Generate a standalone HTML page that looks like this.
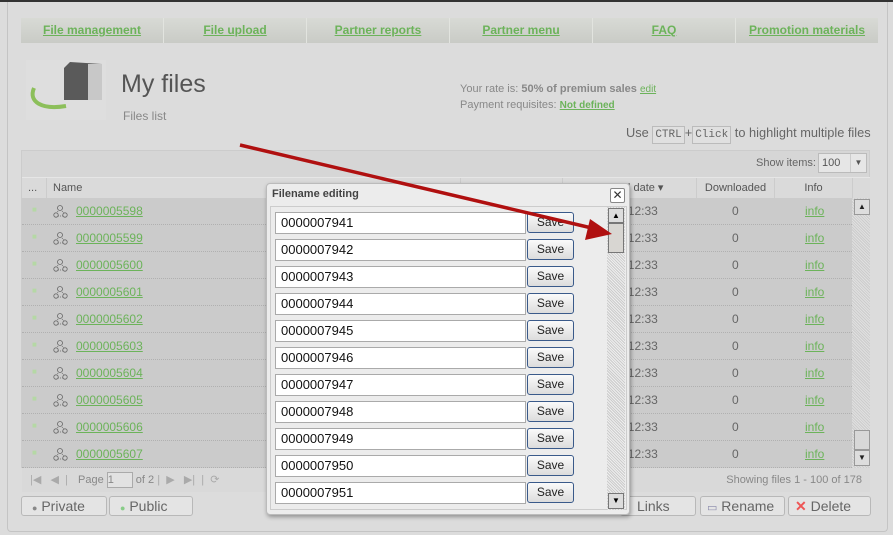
<!DOCTYPE html>
<html><head><meta charset="utf-8"><style>
*{box-sizing:border-box;margin:0;padding:0}
body{width:893px;height:535px;background:#dcdcdc;font-family:"Liberation Sans",Arial,sans-serif;font-size:11px;color:#777;position:relative;overflow:hidden}
.a{position:absolute}
a{color:#6cb35a;text-decoration:underline}
.nav{left:21px;top:18px;width:857px;height:25px;background:linear-gradient(#d8dad5,#c9cbc6);display:flex}
.nav div{flex:1;text-align:center;line-height:25px;font-weight:bold;font-size:12px;border-left:1px solid #e2e4df}
.nav div:first-child{border:none}
.row{position:absolute;left:22px;width:830px;height:27px;background:#cbcbcb;border-bottom:1px dotted #b0b0b0}
.btn{position:absolute;top:496px;height:20px;border:1px solid #b8b8b8;border-radius:3px;background:#e4e4e4;font-size:14px;color:#666;line-height:18px}
.inp{position:absolute;left:275px;width:251px;height:22px;background:#fff;border:1px solid #aaa;font-family:"Liberation Sans",sans-serif;font-size:13px;color:#111;line-height:20px;padding-left:5px}
.sv{position:absolute;left:527px;width:47px;height:21px;border:1px solid #3a5a8a;border-radius:3px;background:linear-gradient(#fafafa,#dcdcdc);font-size:12px;color:#222;text-align:center;line-height:19px}
</style></head><body>
<div class="a" style="left:0;top:0;width:893px;height:2px;background:#333"></div>
<div class="a" style="left:7px;top:2px;width:881px;height:530px;border:1px solid #c4c4c4;border-top:none;border-radius:0 0 4px 4px;background:#dcdcdc"></div>
<div class="a nav"><div><a>File management</a></div><div><a>File upload</a></div><div><a>Partner reports</a></div><div><a>Partner menu</a></div><div><a>FAQ</a></div><div><a>Promotion materials</a></div></div>
<svg class="a" style="left:26px;top:60px" width="80" height="60"><rect x="0" y="0" width="80" height="60" fill="#dedede"/><polygon points="38,8 44,2 76,4 76,40 38,40" fill="#5a5a5a"/><polygon points="62,4 76,4 76,40 62,40" fill="#c8c8c8"/><path d="M8,28 C2,42 16,50 40,46" stroke="#8cbf5a" stroke-width="4" fill="none"/></svg>
<div class="a" style="left:121px;top:70px;font-size:25px;color:#555">My files</div>
<div class="a" style="left:123px;top:109px;font-size:12px;color:#888">Files list</div>
<div class="a" style="left:460px;top:83px;font-size:11px;color:#888">Your rate is: <b>50% of premium sales</b> <a style="font-size:10px">edit</a></div>
<div class="a" style="left:460px;top:99px;font-size:11px;color:#888">Payment requisites: <a style="font-weight:bold;font-size:10px">Not defined</a></div>
<div class="a" style="left:626px;top:125px;font-size:12.8px;color:#666;white-space:nowrap">Use <span style="font-family:'Liberation Mono',monospace;font-size:11px;border:1px solid #bbb;background:#e0e0e0;padding:2px 2px">CTRL</span>+<span style="font-family:'Liberation Mono',monospace;font-size:11px;border:1px solid #bbb;background:#e0e0e0;padding:2px 2px">Click</span> to highlight multiple files</div>
<div class="a" style="left:21px;top:150px;width:849px;height:318px;border:1px solid #ccc;background:#d6d6d6"></div>
<div class="a" style="left:756px;top:157px;font-size:11px;color:#666">Show items:</div>
<div class="a" style="left:818px;top:153px;width:49px;height:20px;border:1px solid #bbb;background:#e6e6e6;font-size:11px;line-height:18px;padding-left:3px;color:#555">100<span style="position:absolute;right:0;top:0;width:16px;height:18px;border-left:1px solid #ccc;text-align:center;font-size:8px">▼</span></div>
<div class="a" style="left:22px;top:177px;width:848px;height:21px;background:#dadada;border-top:1px solid #e6e6e6;font-size:11px;color:#555;line-height:21px">
<span class="a" style="left:6px">...</span><span class="a" style="left:24px;height:21px;border-left:1px solid #ccc;padding-left:6px">Name</span>
<span class="a" style="left:438px;height:21px;border-left:1px solid #ccc;padding-left:6px;color:#bbb">Size</span>
<span class="a" style="left:540px;width:134px;height:21px;border-left:1px solid #ccc;text-align:center">Upload date ▾</span>
<span class="a" style="left:674px;width:78px;height:21px;border-left:1px solid #ccc;text-align:center">Downloaded</span>
<span class="a" style="left:752px;width:78px;height:21px;border-left:1px solid #ccc;text-align:center">Info</span>
<span class="a" style="left:830px;width:18px;height:21px;border-left:1px solid #ccc"></span></div>
<div id="rows"></div>
<div class="a" style="left:852px;top:198px;width:18px;height:270px;background:repeating-linear-gradient(45deg,#ccc 0 1px,#e0e0e0 1px 2px)"></div>
<div class="a" style="left:854px;top:199px;width:16px;height:16px;background:#ddd;border:1px solid #999;font-size:8px;text-align:center;line-height:14px;color:#222">▲</div>
<div class="a" style="left:854px;top:430px;width:16px;height:20px;background:#d8d8d8;border:1px solid #999"></div>
<div class="a" style="left:854px;top:450px;width:16px;height:16px;background:#ddd;border:1px solid #999;font-size:8px;text-align:center;line-height:14px;color:#222">▼</div>
<div class="a" style="left:22px;top:468px;width:848px;height:24px;background:#d9d9d9;font-size:11px;color:#888;line-height:24px">
<span class="a" style="left:8px;color:#aaa">|◀ &nbsp; ◀ &nbsp;|</span><span class="a" style="left:56px">Page <span style="display:inline-block;width:26px;height:16px;border:1px solid #aaa;background:#e2e2e2;line-height:14px;vertical-align:middle">1</span> of 2 <span style="color:#aaa">| &nbsp;▶ &nbsp; ▶| &nbsp;| &nbsp;⟳</span></span>
<span class="a" style="right:8px">Showing files 1 - 100 of 178</span></div>
<div class="btn" style="left:21px;width:86px;padding-left:10px"><span style="color:#888;font-size:9px">●</span> Private</div>
<div class="btn" style="left:109px;width:84px;padding-left:10px"><span style="color:#8c8;font-size:9px">●</span> Public</div>
<div class="btn" style="left:620px;width:76px;padding-left:16px">Links</div>
<div class="btn" style="left:700px;width:85px;padding-left:6px"><span style="color:#88a;font-size:11px">▭</span> Rename</div>
<div class="btn" style="left:788px;width:83px;padding-left:6px"><span style="color:#e55;font-weight:bold">✕</span> Delete</div>
<div class="a" style="left:266px;top:183px;width:364px;height:332px;background:#ececec;border:1px solid #bbb;border-radius:4px;box-shadow:1px 2px 4px rgba(0,0,0,.35)"></div>
<div class="a" style="left:272px;top:188px;font-weight:bold;font-size:11px;color:#444">Filename editing</div>
<div class="a" style="left:610px;top:188px;width:15px;height:15px;border:1px solid #888;border-radius:2px;background:#fff;font-size:12px;text-align:center;line-height:12px;color:#333">✕</div>
<div class="a" style="left:270px;top:206px;width:357px;height:304px;border:1px solid #ccc"></div>
<div id="ed"></div>
<div class="a" style="left:607px;top:207px;width:18px;height:303px;background:repeating-linear-gradient(45deg,#ccc 0 1px,#eee 1px 2px)"></div>
<div class="a" style="left:608px;top:208px;width:16px;height:15px;background:#ddd;border:1px solid #777;font-size:8px;text-align:center;line-height:13px;color:#000">▲</div>
<div class="a" style="left:608px;top:223px;width:16px;height:30px;background:#d8d6d2;border:1px solid #777"></div>
<div class="a" style="left:608px;top:493px;width:16px;height:16px;background:#ddd;border:1px solid #777;font-size:8px;text-align:center;line-height:14px;color:#000">▼</div>
<svg class="a" style="left:0;top:0" width="893" height="535"><line x1="240" y1="145" x2="596" y2="229" stroke="#b01010" stroke-width="3.5"/><polygon points="612,234 590,219 585,240" fill="#b01010"/></svg>
<script>
var h='';for(var i=0;i<10;i++){var y=198+i*27;h+='<div class="row" style="top:'+y+'px"><span class="a" style="left:10px;top:7px;color:#b5d8a5;font-size:8px">■</span><svg class="a" style="left:30px;top:6px" width="18" height="16"><circle cx="8" cy="4" r="2.5" fill="none" stroke="#666" stroke-width=".8"/><circle cx="4" cy="11" r="2.2" fill="none" stroke="#666" stroke-width=".8"/><circle cx="13" cy="11" r="2.2" fill="none" stroke="#666" stroke-width=".8"/><path d="M6,7 L5,9 M10,7 L12,9 M6,12 L11,12" stroke="#666" stroke-width=".8" stroke-dasharray="1 1"/></svg><a class="a" style="left:54px;top:6px;font-size:12px">000000'+(5598+i)+'</a><span class="a" style="left:590px;top:6px;color:#666;font-size:12px">11 12:33</span><span class="a" style="left:710px;top:6px;color:#666;font-size:12px">0</span><a class="a" style="left:783px;top:6px;font-size:12px">info</a></div>'}
document.getElementById('rows').innerHTML=h;
h='';for(i=0;i<11;i++){y=212+i*27;h+='<div class="inp" style="top:'+y+'px">000000'+(7941+i)+'</div><div class="sv" style="top:'+y+'px">Save</div>'}
document.getElementById('ed').innerHTML=h;
</script>
</body></html>
